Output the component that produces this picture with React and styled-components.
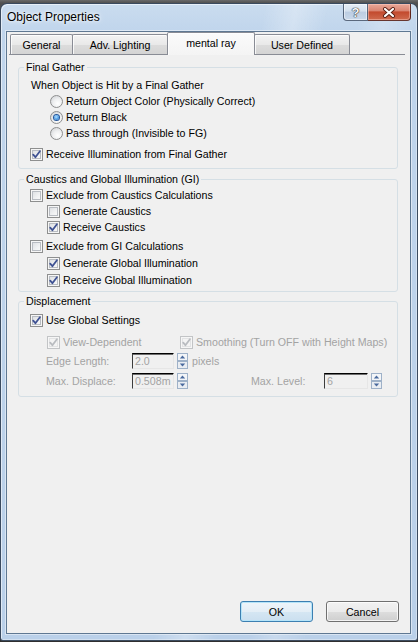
import React from "react"
import styled, { createGlobalStyle } from "styled-components"

const GlobalStyle = createGlobalStyle`
	html, body {
		margin: 0;
		padding: 0;
	}
	body {
		background: #3a3a3a;
		font-family: "Liberation Sans", Arial, sans-serif;
		font-size: 10.65px;
		color: #000;
	}
`

const Screen = styled.div`
	width: 418px;
	height: 642px;
	overflow: hidden;
	box-sizing: border-box;
	padding-top: 3px;
	background: linear-gradient(to bottom, #6a6a6a 0, #505050 3px, #2f2f2f 100%);
`

const Window = styled.div`
	height: 638px;
	box-sizing: border-box;
	display: flex;
	flex-direction: column;
	padding-bottom: 6px;
	border: 1px solid rgba(35, 50, 70, 0.85);
	border-radius: 7px 7px 3px 3px;
	background:
		linear-gradient(100deg, transparent 0, transparent 50%, rgba(255, 255, 255, 0.28) 56%, transparent 62%, transparent 68%, rgba(255, 255, 255, 0.2) 73%, transparent 79%),
		linear-gradient(to bottom, #cadcef 0, #c0d5ec 28px, #bad0e9 100%);
	box-shadow: inset 1px 1px 0 rgba(255, 255, 255, 0.55), inset -1px -1px 0 rgba(255, 255, 255, 0.35);
`

const TitleBar = styled.div`
	height: 27px;
	display: flex;
	align-items: flex-start;
	justify-content: space-between;
	padding-left: 6px;
`

const Title = styled.div`
	margin-top: 6px;
	line-height: 14px;
	font-size: 12px;
	color: #000;
	text-shadow: 0 0 6px rgba(255, 255, 255, 0.9), 0 0 3px #fff;
`

const Controls = styled.div`
	display: flex;
	margin-right: 6px;
`

const HelpButton = styled.div`
	width: 25px;
	height: 17px;
	box-sizing: border-box;
	border: 1px solid rgba(45, 60, 85, 0.75);
	border-top: none;
	border-radius: 0 0 0 4px;
	background: linear-gradient(to bottom, #e6edf6 0, #d4e0ee 45%, #bccde2 50%, #c9d8ea 100%);
	box-shadow: inset 0 0 0 1px rgba(255, 255, 255, 0.5);
	display: flex;
	align-items: center;
	justify-content: center;
	font-weight: bold;
	font-size: 13px;
	color: #f4f6f9;
	text-shadow: 0 0 1px #333, 0 0 1px #333, 0 0 1px #333;
`

const CloseButton = styled.div`
	width: 43px;
	height: 17px;
	box-sizing: border-box;
	border: 1px solid rgba(70, 25, 20, 0.8);
	border-left: none;
	border-top: none;
	border-radius: 0 0 4px 0;
	background: linear-gradient(to bottom, #e9a899 0, #d98572 42%, #c34a2e 50%, #cf6b4f 100%);
	box-shadow: inset 0 0 0 1px rgba(255, 210, 200, 0.45);
	display: flex;
	align-items: center;
	justify-content: center;
`

const Client = styled.div`
	flex: 1;
	margin: 0 6px 0 5px;
	box-sizing: border-box;
	border: 1px solid #5f7892;
	box-shadow: 0 0 0 1px rgba(255, 255, 255, 0.45);
	background: #f0f0f0;
	display: flex;
	flex-direction: column;
`

const TabStrip = styled.div`
	height: 22px;
	display: flex;
	align-items: flex-end;
	padding-left: 3px;
`

const Tab = styled.div`
	width: ${(p) => p.$w}px;
	height: ${(p) => (p.$active ? 23 : 20)}px;
	margin-left: ${(p) => (p.$first ? 0 : -1)}px;
	margin-bottom: ${(p) => (p.$active ? -1 : 0)}px;
	position: relative;
	z-index: ${(p) => (p.$active ? 1 : 0)};
	box-sizing: border-box;
	border: 1px solid #898c95;
	border-bottom: none;
	border-radius: 2px 2px 0 0;
	background: ${(p) =>
		p.$active
			? "linear-gradient(to bottom, #fbfbfb 0, #f4f4f4 100%)"
			: "linear-gradient(to bottom, #f3f3f3 0, #e9e9e9 50%, #dcdcdc 52%, #d4d4d4 100%)"};
	box-shadow: inset 1px 1px 0 rgba(255, 255, 255, 0.8);
	display: flex;
	align-items: center;
	justify-content: center;
	padding-bottom: ${(p) => (p.$active ? 2 : 0)}px;
	color: #000;
`

const Panel = styled.div`
	flex: 1;
	margin: 0 5px 0 2px;
	border-top: 1px solid #898c95;
	display: flex;
	flex-direction: column;
`

const Group = styled.fieldset`
	margin: ${(p) => p.$top}px 7px 0 9px;
	padding: 0;
	border: 1px solid #d5dfe5;
	border-radius: 3px;
	min-width: 0;
`

const Legend = styled.legend`
	margin-left: 5px;
	padding: 0 2px;
	height: 15px;
	line-height: 15px;
	color: #000;
`

const GroupBody = styled.div`
	padding: ${(p) => p.$pt}px 0 ${(p) => p.$pb}px 11px;
`

const Row = styled.div`
	display: flex;
	align-items: center;
	height: 16px;
	line-height: 16px;
	margin-top: ${(p) => p.$mt || 0}px;
	padding-left: ${(p) => p.$indent || 0}px;
	color: ${(p) => (p.$disabled ? "#a3a3a3" : "#000")};
	white-space: nowrap;
`

const Item = styled.div`
	display: flex;
	align-items: center;
	width: ${(p) => (p.$w ? `${p.$w}px` : "auto")};
	flex: none;
`

const Box = styled.span`
	width: 13px;
	height: 13px;
	flex: none;
	box-sizing: border-box;
	margin-right: 3px;
	border: 1px solid ${(p) => (p.$disabled ? "#c2c4c6" : "#8e8f8f")};
	background: ${(p) =>
		p.$disabled ? "#f4f4f4" : "linear-gradient(135deg, #d6d9dd 0, #f1f2f3 60%, #fbfbfb 100%)"};
	box-shadow: inset 0 0 0 1px #f6f6f6, inset 0 0 0 2px ${(p) => (p.$disabled ? "#e2e3e4" : "#b8bcc2")};
	display: flex;
	align-items: center;
	justify-content: center;
`

const RadioCircle = styled.span`
	width: 13px;
	height: 13px;
	flex: none;
	box-sizing: border-box;
	margin-right: 3px;
	border-radius: 50%;
	border: 1px solid #8e8f8f;
	background: radial-gradient(circle at 62% 68%, #ffffff 0, #eeeff0 45%, #c9ccd0 100%);
	display: flex;
	align-items: center;
	justify-content: center;
`

const RadioDot = styled.span`
	width: 5px;
	height: 5px;
	border-radius: 50%;
	background: radial-gradient(circle at 45% 40%, #b4e0ff 0, #4b9be4 55%, #1b5fae 100%);
	box-shadow: 0 0 0 1px #25569a;
`

const Label = styled.span`
	flex: none;
	width: ${(p) => (p.$w ? `${p.$w}px` : "auto")};
`

const Field = styled.span`
	width: ${(p) => p.$w}px;
	height: 16px;
	flex: none;
	box-sizing: border-box;
	border-top: 1px solid #000;
	border-left: 1px solid #3c3c3c;
	border-right: 1px solid #e6e6e6;
	border-bottom: 1px solid #e6e6e6;
	box-shadow: inset 0 1px 0 #6e6e6e;
	background: #f0f0f0;
	color: #a3a3a3;
	padding-left: 2px;
	line-height: 15px;
	margin-right: 3px;
`

const Unit = styled.span`
	margin-left: 4px;
`

const Gap = styled.span`
	width: ${(p) => p.$w}px;
	flex: none;
`

const ButtonRow = styled.div`
	display: flex;
	justify-content: flex-end;
	gap: 13px;
	padding: 0 11px 11px 0;
`

const Button = styled.button`
	width: 73px;
	height: 21px;
	box-sizing: border-box;
	padding: 0;
	border: 1px solid ${(p) => (p.$default ? "#3c7fb1" : "#707070")};
	border-radius: 3px;
	background: ${(p) =>
		p.$default
			? "linear-gradient(to bottom, #eef5fa 0, #e4eef6 50%, #d5e6f3 52%, #cbdfef 100%)"
			: "linear-gradient(to bottom, #f2f2f2 0, #ebebeb 50%, #dddddd 52%, #cfcfcf 100%)"};
	box-shadow: inset 0 0 0 1px ${(p) => (p.$default ? "#b5e4f9" : "rgba(255, 255, 255, 0.75)")};
	font-family: "Liberation Sans", Arial, sans-serif;
	font-size: 10.65px;
	color: #000;
`

const Check = ({ checked, disabled }) => (
	<Box $disabled={disabled}>
		{checked && (
			<svg width="11" height="11" viewBox="0 0 11 11">
				<path
					d="M2.2 5.6 L4.4 8.2 L8.9 2.3"
					fill="none"
					stroke={disabled ? "#b9bcc0" : "#3f5293"}
					strokeWidth="1.8"
					strokeLinecap="round"
					strokeLinejoin="round"
				/>
			</svg>
		)}
	</Box>
)

const Radio = ({ checked }) => (
	<RadioCircle>{checked && <RadioDot />}</RadioCircle>
)

const Spinner = () => (
	<svg width="11" height="16" viewBox="0 0 11 16">
		<rect x="0.5" y="0.5" width="10" height="7" fill="#f3f5f8" stroke="#9eb1c8" />
		<rect x="0.5" y="8.5" width="10" height="7" fill="#e9edf2" stroke="#9eb1c8" />
		<polygon points="2.8,5.6 5.5,2.4 8.2,5.6" fill="#4a6a9e" />
		<polygon points="2.8,10.4 8.2,10.4 5.5,13.6" fill="#4a6a9e" />
	</svg>
)

const CheckRow = ({ label, checked, disabled, indent, mt }) => (
	<Row $indent={indent} $mt={mt} $disabled={disabled}>
		<Check checked={checked} disabled={disabled} />
		<Label>{label}</Label>
	</Row>
)

const RadioRow = ({ label, checked }) => (
	<Row $indent={20}>
		<Radio checked={checked} />
		<Label>{label}</Label>
	</Row>
)

const App = () => {
	return (
		<>
			<GlobalStyle />
			<Screen>
				<Window>
					<TitleBar>
						<Title>Object Properties</Title>
						<Controls>
							<HelpButton>?</HelpButton>
							<CloseButton>
								<svg width="14" height="11" viewBox="0 0 14 11">
									<path d="M3 2 L11 9 M11 2 L3 9" stroke="#5a1f14" strokeWidth="4" strokeLinecap="round" />
									<path d="M3 2 L11 9 M11 2 L3 9" stroke="#ffffff" strokeWidth="2.2" strokeLinecap="round" />
								</svg>
							</CloseButton>
						</Controls>
					</TitleBar>
					<Client>
						<TabStrip>
							<Tab $w={63} $first>General</Tab>
							<Tab $w={96}>Adv. Lighting</Tab>
							<Tab $w={88} $active>mental ray</Tab>
							<Tab $w={96}>User Defined</Tab>
						</TabStrip>
						<Panel>
							<Group $top={5}>
								<Legend>Final Gather</Legend>
								<GroupBody $pt={2} $pb={6}>
									<Row $indent={1}>When Object is Hit by a Final Gather</Row>
									<RadioRow label="Return Object Color (Physically Correct)" />
									<RadioRow label="Return Black" checked />
									<RadioRow label="Pass through (Invisible to FG)" />
									<CheckRow label="Receive Illumination from Final Gather" checked indent={-1} mt={5} />
								</GroupBody>
							</Group>
							<Group $top={3}>
								<Legend>Caustics and Global Illumination (GI)</Legend>
								<GroupBody $pt={0} $pb={3}>
									<CheckRow label="Exclude from Caustics Calculations" />
									<CheckRow label="Generate Caustics" indent={17} />
									<CheckRow label="Receive Caustics" indent={17} checked />
									<CheckRow label="Exclude from GI Calculations" mt={3} />
									<CheckRow label="Generate Global Illumination" indent={17} checked mt={1} />
									<CheckRow label="Receive Global Illumination" indent={17} checked mt={1} />
								</GroupBody>
							</Group>
							<Group $top={2}>
								<Legend>Displacement</Legend>
								<GroupBody $pt={3} $pb={7}>
									<CheckRow label="Use Global Settings" checked />
									<Row $indent={17} $mt={6} $disabled>
										<Item $w={133}>
											<Check checked disabled />
											<Label>View-Dependent</Label>
										</Item>
										<Item>
											<Check checked disabled />
											<Label>Smoothing (Turn OFF with Height Maps)</Label>
										</Item>
									</Row>
									<Row $indent={16} $mt={3} $disabled>
										<Label $w={86}>Edge Length:</Label>
										<Field $w={42}>2.0</Field>
										<Spinner />
										<Unit>pixels</Unit>
									</Row>
									<Row $indent={16} $mt={4} $disabled>
										<Label $w={86}>Max. Displace:</Label>
										<Field $w={42}>0.508m</Field>
										<Spinner />
										<Gap $w={63} />
										<Label $w={73}>Max. Level:</Label>
										<Field $w={44}>6</Field>
										<Spinner />
									</Row>
								</GroupBody>
							</Group>
						</Panel>
						<ButtonRow>
							<Button $default>OK</Button>
							<Button>Cancel</Button>
						</ButtonRow>
					</Client>
				</Window>
			</Screen>
		</>
	)
}

export default App
